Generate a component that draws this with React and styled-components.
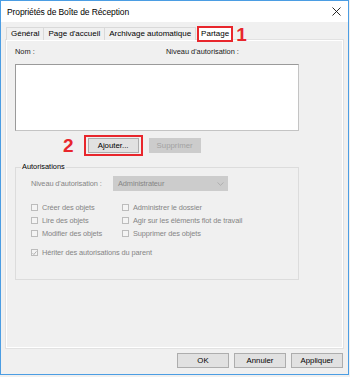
import React from "react";
import styled, { createGlobalStyle } from "styled-components";

const GlobalStyle = createGlobalStyle`
  html, body {
    margin: 0;
    padding: 0;
    background: #f0f0f0;
  }
  body {
    font-family: "Liberation Sans", Arial, sans-serif;
    color: #000;
  }
`;

const RED = "#e8262c";
const DISABLED = "#858585";

const Window = styled.div`
  box-sizing: border-box;
  width: 349px;
  height: 375px;
  border: 1px solid #4b9de3;
  background: #f0f0f0;
  display: flex;
  flex-direction: column;
`;

const TitleBar = styled.div`
  height: 21px;
  background: #fff;
  display: flex;
  align-items: center;
  justify-content: space-between;
  padding: 0 6px 0 6px;
  font-size: 8.5px;
  letter-spacing: -0.1px;
`;

const CloseIcon = styled.svg`
  width: 9px;
  height: 9px;
  margin-right: 1px;
`;

const TabStrip = styled.div`
  display: flex;
  align-items: flex-end;
  height: 16px;
  margin-top: 4px;
  padding-left: 5px;
  position: relative;
  z-index: 1;
`;

const Tab = styled.div`
  box-sizing: border-box;
  height: 13px;
  margin-bottom: 2px;
  padding: 0 4px;
  font-size: 8px;
  line-height: 12px;
  border: 1px solid #d9d9d9;
  border-bottom: none;
  border-left: ${(p) => (p.$first ? "1px solid #d9d9d9" : "none")};
  background: #f0f0f0;
  white-space: nowrap;
`;

const ActiveTab = styled.div`
  box-sizing: border-box;
  height: 16px;
  margin-left: 1px;
  padding: 0 2px;
  font-size: 8px;
  line-height: 12px;
  border: 2px solid ${RED};
  background: #fff;
  white-space: nowrap;
`;

const Marker = styled.span`
  color: ${RED};
  font-size: 19px;
  font-weight: bold;
  line-height: 15px;
  font-family: "Liberation Sans", Arial, sans-serif;
`;

const TabMarker = styled(Marker)`
  margin-left: 3px;
  align-self: flex-start;
  margin-top: 1px;
`;

const Panel = styled.div`
  box-sizing: border-box;
  height: 308px;
  margin: -2px 5px 0 5px;
  border: 1px solid #fff;
  box-shadow: 0 0 0 1px #e2e2e2;
  padding: 5px 8px 0 8px;
  display: flex;
  flex-direction: column;
`;

const LabelRow = styled.div`
  display: grid;
  grid-template-columns: 151px 1fr;
  height: 11px;
  font-size: 7.4px;
  line-height: 11px;
  color: #1a1a1a;
`;

const ListBox = styled.div`
  box-sizing: border-box;
  width: 284px;
  height: 67px;
  margin-top: 7px;
  background: #fff;
  border: 1px solid #9a9a9a;
  border-right-color: #c4c4c4;
  border-bottom-color: #c4c4c4;
`;

const ButtonRow = styled.div`
  display: flex;
  align-items: center;
  height: 21px;
  margin-top: 4px;
  padding-left: 48px;
`;

const Highlight = styled.div`
  display: flex;
  padding: 1px 2px;
  border: 2px solid ${RED};
  margin-left: 10px;
`;

const Button = styled.div`
  box-sizing: border-box;
  width: ${(p) => p.$w || 52}px;
  height: 15px;
  display: flex;
  align-items: center;
  justify-content: center;
  font-size: 7.8px;
  border: 1px solid ${(p) => (p.$disabled ? "#cccccc" : "#adadad")};
  background: ${(p) => (p.$disabled ? "#cccccc" : "#e1e1e1")};
  color: ${(p) => (p.$disabled ? "#a2a2a2" : "#000")};
  margin-left: ${(p) => p.$ml || 0}px;
`;

const Group = styled.fieldset`
  box-sizing: border-box;
  width: 284px;
  margin: 6px 0 0 0;
  padding: 0 0 20px 5px;
  border: 1px solid #dcdcdc;
  min-width: 0;
`;

const Legend = styled.legend`
  padding: 0 1px;
  font-size: 7.4px;
  line-height: 10px;
  color: #000;
`;

const LevelRow = styled.div`
  display: flex;
  align-items: center;
  margin: 4px 0 0 10px;
  height: 15px;
`;

const DisabledText = styled.span`
  font-size: 7.4px;
  color: ${DISABLED};
  white-space: nowrap;
  letter-spacing: -0.1px;
`;

const LevelLabel = styled(DisabledText)`
  width: 82px;
`;

const Select = styled.div`
  box-sizing: border-box;
  width: 115px;
  height: 15px;
  background: #cccccc;
  display: flex;
  align-items: center;
  justify-content: space-between;
  padding: 0 4px 0 5px;
`;

const Chevron = styled.svg`
  width: 7px;
  height: 4px;
`;

const CheckGrid = styled.div`
  display: grid;
  grid-template-columns: 91px 1fr;
  grid-auto-rows: 13px;
  margin: 10px 0 0 10px;
`;

const CheckItem = styled.div`
  display: flex;
  align-items: center;
  gap: 4px;
  margin-top: ${(p) => p.$mt || 0}px;
  height: 13px;
`;

const Box = styled.span`
  box-sizing: border-box;
  width: 7px;
  height: 7px;
  border: 1px solid #bcbcbc;
  background: #f4f4f4;
  display: flex;
  align-items: center;
  justify-content: center;
  flex-shrink: 0;
`;

const InheritRow = styled.div`
  margin-left: 10px;
`;

const Footer = styled.div`
  display: flex;
  justify-content: flex-end;
  gap: 5px;
  margin-top: 5px;
  padding-right: 5px;
`;

const Check = ({ label, checked, mt }) => (
  <CheckItem $mt={mt}>
    <Box>
      {checked && (
        <svg width="6" height="6" viewBox="0 0 6 6">
          <path d="M0.6 3.2 L2.2 4.8 L5.4 1" fill="none" stroke="#9a9a9a" strokeWidth="0.9" />
        </svg>
      )}
    </Box>
    <DisabledText>{label}</DisabledText>
  </CheckItem>
);

export default function App() {
  return (
    <>
      <GlobalStyle />
      <Window>
        <TitleBar>
          <span>Propriétés de Boîte de Réception</span>
          <CloseIcon viewBox="0 0 9 9">
            <path d="M0.5 0.5 L8.5 8.5 M8.5 0.5 L0.5 8.5" stroke="#111" strokeWidth="0.9" />
          </CloseIcon>
        </TitleBar>

        <TabStrip>
          <Tab $first>Général</Tab>
          <Tab>Page d'accueil</Tab>
          <Tab>Archivage automatique</Tab>
          <ActiveTab>Partage</ActiveTab>
          <TabMarker>1</TabMarker>
        </TabStrip>

        <Panel>
          <LabelRow>
            <span>Nom :</span>
            <span>Niveau d'autorisation :</span>
          </LabelRow>
          <ListBox />

          <ButtonRow>
            <Marker>2</Marker>
            <Highlight>
              <Button $w={51}>Ajouter...</Button>
            </Highlight>
            <Button $w={52} $ml={6} $disabled>
              Supprimer
            </Button>
          </ButtonRow>

          <Group>
            <Legend>Autorisations</Legend>
            <LevelRow>
              <LevelLabel>Niveau d'autorisation :</LevelLabel>
              <Select>
                <DisabledText>Administrateur</DisabledText>
                <Chevron viewBox="0 0 7 4">
                  <path d="M0.5 0.5 L3.5 3.3 L6.5 0.5" fill="none" stroke="#a8a8a8" strokeWidth="0.8" />
                </Chevron>
              </Select>
            </LevelRow>

            <CheckGrid>
              <Check label="Créer des objets" />
              <Check label="Administrer le dossier" />
              <Check label="Lire des objets" />
              <Check label="Agir sur les éléments flot de travail" />
              <Check label="Modifier des objets" />
              <Check label="Supprimer des objets" />
            </CheckGrid>

            <InheritRow>
              <Check label="Hériter des autorisations du parent" checked mt={6} />
            </InheritRow>
          </Group>
        </Panel>

        <Footer>
          <Button>OK</Button>
          <Button>Annuler</Button>
          <Button>Appliquer</Button>
        </Footer>
      </Window>
    </>
  );
}
